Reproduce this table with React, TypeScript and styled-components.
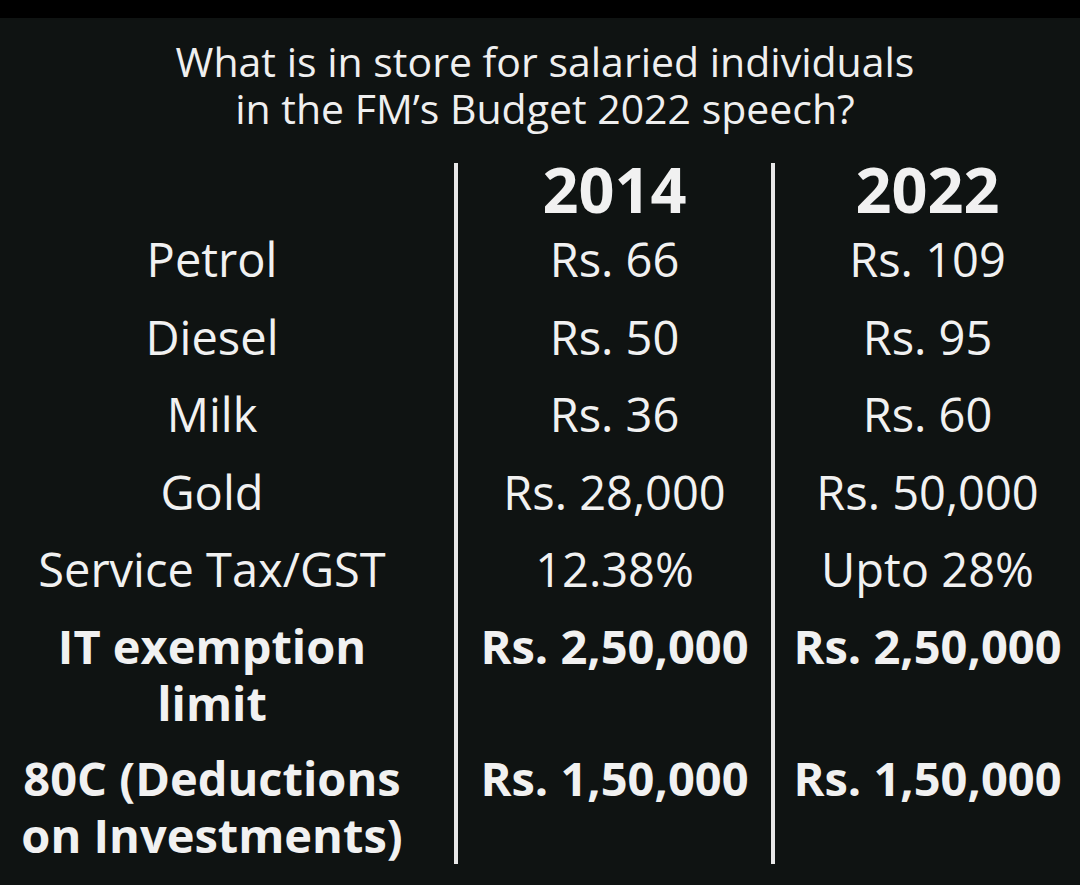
import styled, { createGlobalStyle } from 'styled-components';

const GlobalStyle = createGlobalStyle`
  html, body {
    margin: 0;
    padding: 0;
    background: #0f1312;
  }
  body {
    font-family: 'Open Sans', 'Noto Sans', sans-serif;
    color: #f1f1f1;
  }
`;

const Page = styled.div`
  width: 1080px;
  height: 885px;
  overflow: hidden;
  background: #0f1312;
`;

const TopBand = styled.div`
  height: 18px;
  background: #000;
`;

const Title = styled.h1`
  margin: 20px 0 31px;
  padding-left: 10px;
  font-size: 41px;
  font-weight: 400;
  line-height: 47px;
  text-align: center;
  color: #efefef;
`;

const TitleLine = styled.span`
  display: block;
`;

const Table = styled.div`
  display: flex;
  flex-direction: column;
`;

const Row = styled.div<{ $kind: 'head' | 'plain' | 'bold' }>`
  display: grid;
  grid-template-columns: 454px 317px 1fr;

  & > * {
    font-size: ${(p) => (p.$kind === 'head' ? 63 : 47)}px;
    font-weight: ${(p) => (p.$kind === 'plain' ? 400 : 700)};
    line-height: ${(p) => (p.$kind === 'head' ? 52 : p.$kind === 'bold' ? 57 : 77.5)}px;
    padding: ${(p) => (p.$kind === 'head' ? '0 0 6px' : p.$kind === 'bold' ? '9px 0 9px' : '0')};
  }

  &:last-child > * {
    padding-bottom: 0;
  }
`;

const Label = styled.div`
  padding-right: 30px;
  text-align: center;
  white-space: nowrap;
`;

const Value = styled.div`
  border-left: 4px solid #e8e8e8;
  text-align: center;
  white-space: nowrap;
`;

const rows: { label: string[]; y2014: string; y2022: string; bold?: boolean }[] = [
  { label: ['Petrol'], y2014: 'Rs. 66', y2022: 'Rs. 109' },
  { label: ['Diesel'], y2014: 'Rs. 50', y2022: 'Rs. 95' },
  { label: ['Milk'], y2014: 'Rs. 36', y2022: 'Rs. 60' },
  { label: ['Gold'], y2014: 'Rs. 28,000', y2022: 'Rs. 50,000' },
  { label: ['Service Tax/GST'], y2014: '12.38%', y2022: 'Upto 28%' },
  { label: ['IT exemption', 'limit'], y2014: 'Rs. 2,50,000', y2022: 'Rs. 2,50,000', bold: true },
  {
    label: ['80C (Deductions', 'on Investments)'],
    y2014: 'Rs. 1,50,000',
    y2022: 'Rs. 1,50,000',
    bold: true,
  },
];

export default function App() {
  return (
    <Page>
      <GlobalStyle />
      <TopBand />
      <Title>
        <TitleLine>What is in store for salaried individuals</TitleLine>
        <TitleLine>in the FM’s Budget 2022 speech?</TitleLine>
      </Title>
      <Table>
        <Row $kind='head'>
          <Label />
          <Value>2014</Value>
          <Value>2022</Value>
        </Row>
        {rows.map((r) => (
          <Row key={r.label[0]} $kind={r.bold ? 'bold' : 'plain'}>
            <Label>
              {r.label.map((l, i) => (
                <div key={i}>{l}</div>
              ))}
            </Label>
            <Value>{r.y2014}</Value>
            <Value>{r.y2022}</Value>
          </Row>
        ))}
      </Table>
    </Page>
  );
}
